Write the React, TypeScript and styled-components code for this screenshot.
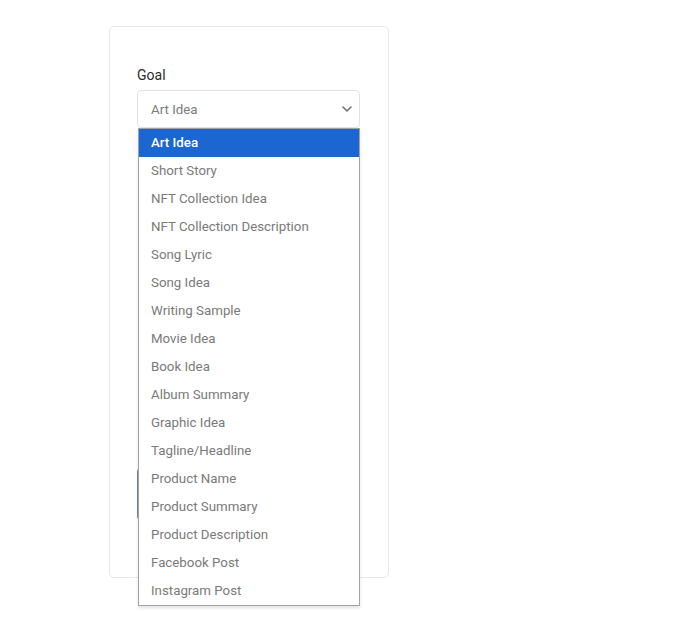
import React, { useState } from "react";
import styled, { createGlobalStyle } from "styled-components";
import { FiChevronDown } from "react-icons/fi";

const GlobalStyle = createGlobalStyle`
  html, body {
    margin: 0;
    padding: 0;
    background: #ffffff;
    font-family: Roboto, "Liberation Sans", Arial, sans-serif;
  }
`;

const StyledPage = styled.div`
  min-height: 620px;
  box-sizing: border-box;
  padding: 26px 0 0 109px;
`;

const StyledCard = styled.div`
  box-sizing: border-box;
  width: 280px;
  height: 552px;
  border: 1px solid #e6e6e6;
  border-radius: 5px;
  background: #ffffff;
  padding: 39px 27px 0 27px;
  display: flex;
  flex-direction: column;
`;

const StyledLabel = styled.label`
  font-size: 14px;
  line-height: 18px;
  color: #2b2b2b;
  margin-bottom: 6px;
`;

const StyledSelectWrap = styled.div`
  position: relative;
  width: 223px;
`;

const StyledSelect = styled.div`
  box-sizing: border-box;
  display: flex;
  align-items: center;
  justify-content: space-between;
  height: 38px;
  padding: 0 4px 0 13px;
  border: 1px solid #e3e3e3;
  border-radius: 4px;
  font-size: 13.3px;
  color: #7a7a7a;
  cursor: pointer;
`;

const StyledChevron = styled(FiChevronDown)`
  width: 16px;
  height: 16px;
  color: #6f6f6f;
  stroke-width: 2.4;
`;

const StyledList = styled.ul`
  position: absolute;
  z-index: 2;
  top: 38px;
  left: 1px;
  box-sizing: border-box;
  width: 222px;
  margin: 0;
  padding: 0;
  list-style: none;
  background: #ffffff;
  border: 1px solid #a3a3a3;
  box-shadow: 0 2px 3px rgba(0, 0, 0, 0.12);
`;

const StyledOption = styled.li<{ $active: boolean }>`
  height: 28px;
  line-height: 28px;
  padding-left: 12px;
  font-size: 13.3px;
  color: ${props => (props.$active ? "#ffffff" : "#7a7a7a")};
  background: ${props => (props.$active ? "#1b66d1" : "transparent")};
  font-weight: ${props => (props.$active ? 500 : 400)};
  white-space: nowrap;
`;

const StyledButton = styled.button`
  margin-top: 340px;
  width: 223px;
  height: 52px;
  border: none;
  border-radius: 4px;
  background: #6a86ab;
`;

const options = [
  "Art Idea",
  "Short Story",
  "NFT Collection Idea",
  "NFT Collection Description",
  "Song Lyric",
  "Song Idea",
  "Writing Sample",
  "Movie Idea",
  "Book Idea",
  "Album Summary",
  "Graphic Idea",
  "Tagline/Headline",
  "Product Name",
  "Product Summary",
  "Product Description",
  "Facebook Post",
  "Instagram Post"
];

export default function App() {
  const [value, setValue] = useState("Art Idea");

  return (
    <StyledPage>
      <GlobalStyle />
      <StyledCard>
        <StyledLabel>Goal</StyledLabel>
        <StyledSelectWrap>
          <StyledSelect>
            {value}
            <StyledChevron />
          </StyledSelect>
          <StyledList>
            {options.map(option => (
              <StyledOption
                key={option}
                $active={option === value}
                onClick={() => setValue(option)}
              >
                {option}
              </StyledOption>
            ))}
          </StyledList>
        </StyledSelectWrap>
        <StyledButton type="button" aria-label="Generate" />
      </StyledCard>
    </StyledPage>
  );
}
